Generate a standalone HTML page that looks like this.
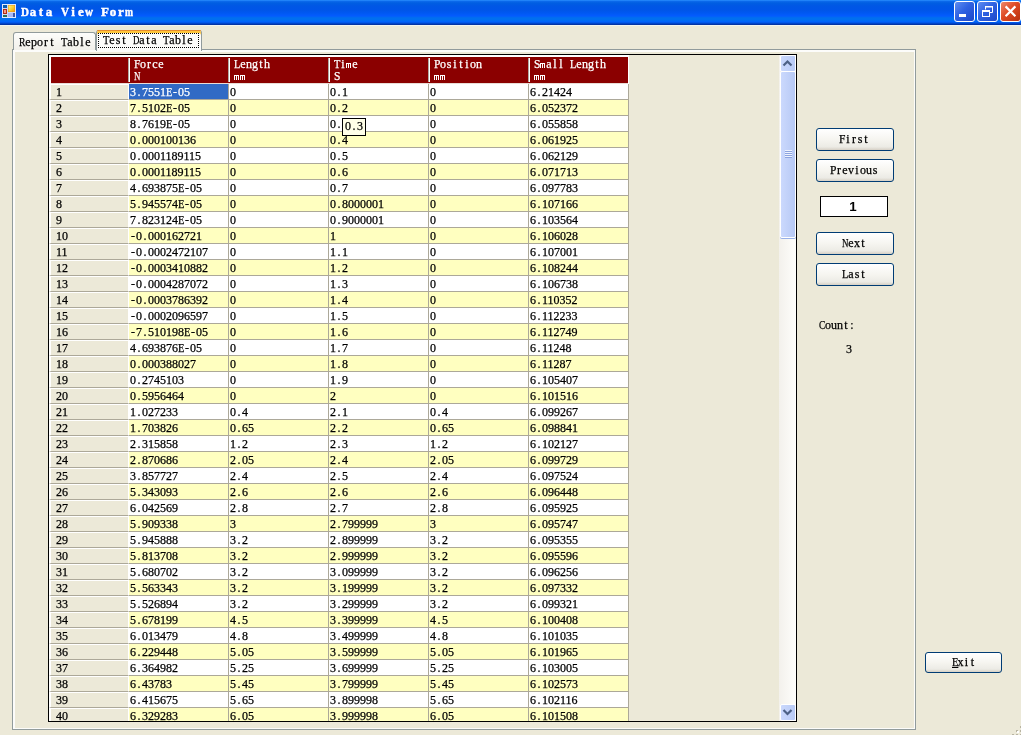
<!DOCTYPE html>
<html><head><meta charset="utf-8"><title>Data View Form</title>
<style>
html,body{margin:0;padding:0}
body{width:1021px;height:735px;overflow:hidden;background:#ECE9D8;position:relative;font-family:"Liberation Serif",serif;font-size:12px;color:#000}
div{box-sizing:border-box}
#w{position:absolute;left:0;top:0;width:1021px;height:735px;overflow:hidden;will-change:transform;-webkit-text-stroke:.25px}
/* monospace-cell emulation */
.m{white-space:nowrap}
.m b{display:inline-block;width:6px;text-align:center;font-weight:normal;white-space:nowrap}
.m b[class^=q]{text-align:left;transform-origin:0 50%}
.m s{display:inline-block;width:6px;text-decoration:none}
.m b.mo{width:6px;height:5px;font-size:0;line-height:0;vertical-align:baseline;overflow:hidden;background:linear-gradient(currentColor,currentColor) 0 0/5px 1px no-repeat,linear-gradient(currentColor,currentColor) 0 0/1px 5px no-repeat,linear-gradient(currentColor,currentColor) 2px 0/1px 5px no-repeat,linear-gradient(currentColor,currentColor) 4px 0/1px 5px no-repeat}
.q74{transform:scaleX(.74)}
.q80{transform:scaleX(.80)}
.q87{transform:scaleX(.87)}
.q96{transform:scaleX(.96)}
#tb{position:absolute;left:0;top:0;width:1021px;height:26px;border-bottom:1px solid #f1f5f1;background:linear-gradient(180deg,#2a8fff 0,#0a68ea 1.5px,#005ee2 3px,#0057e5 6px,#0055e8 10px,#0058f2 13px,#045cfe 16px,#0070ee 18px,#006ef2 20px,#0064fa 21.5px,#0052e4 23px,#0038b0 24px,#06309a 25px)}
#ico{position:absolute;left:2px;top:4px}
#ttl{position:absolute;left:21px;top:4px;height:16px;line-height:16px;font-family:"Liberation Serif",serif;font-weight:bold;font-size:13px;color:#fff;white-space:nowrap}
#ttl b{display:inline-block;width:8px;text-align:center;-webkit-text-stroke:.45px #fff}
.cb{position:absolute;top:1px;width:21px;height:21px;border:1px solid #fff;border-radius:3px;background:linear-gradient(135deg,#5e8df0 0,#2f62e2 45%,#1d47c8 100%);overflow:hidden}
.cb svg{position:absolute;left:-1px;top:-1px}
.cx{background:linear-gradient(135deg,#ee8a6c 0,#de4a24 45%,#b8300f 100%)}
#page{position:absolute;left:12px;top:49px;width:904px;height:681px;border:1px solid #919b9c;box-shadow:inset 2px 2px 0 #fcfcfa,inset -1px -1px 0 #fcfcfa}
#tab1{position:absolute;left:13px;top:32px;width:83px;height:18px;border:1px solid #919b9c;border-bottom:none;border-radius:3px 3px 0 0;background:linear-gradient(#fdfdfb,#f1f0ea);padding-left:5px;line-height:17px;padding-top:1px}
#tab2{position:absolute;left:96px;top:30px;width:106px;height:21px;border:1px solid #919b9c;border-bottom:none;border-top:none;border-radius:3px 3px 0 0;background:#fcfcfa;box-shadow:inset 0 3px 0 #ffc73c}
#tab2:before{content:"";position:absolute;left:0;right:0;top:0;height:1px;background:#e68b2c;border-radius:3px 3px 0 0}
#focus{position:absolute;left:1px;top:3px;width:101px;height:15px;border:1px dotted #000;line-height:13px;padding-left:4px}
#grid{position:absolute;left:48px;top:54px;width:749px;height:668px;border:1px solid #000;background:#ECE9D8;overflow:hidden}
#hdr{position:absolute;left:0;top:0;width:580px;height:29px;background:#fff}
#hdr:before{content:"";position:absolute;left:2px;top:2px;width:577px;height:26px;background:#8b0000}
#hdr:after{content:"";position:absolute;left:2px;top:28px;width:577px;height:1px;background:#e9dcd6}
.hc{position:absolute;top:2px;height:26px;background:#8b0000;color:#fff;line-height:12px;padding:1px 0 0 4px;overflow:hidden}
.hs{position:absolute;top:3px;width:2px;height:24px;background:#fff;border-left:1px solid #b0a8a0}
.r{position:absolute;left:0;width:580px;height:16px;line-height:15px}
.rh,.c{position:absolute;top:0;height:16px;border-bottom:1px solid #aca899;overflow:hidden}
.rh{left:0;width:80px;background:#ECE9D8;border-left:2px solid #fff;border-top:1px solid #fff;border-right:1px solid #fff;padding-left:5px;line-height:14px}
.c{width:100px;background:#fff;border-right:1px solid #aca899;padding:1px 0 0 1px}
.c:nth-child(2){left:80px}.c:nth-child(3){left:180px}.c:nth-child(4){left:280px}.c:nth-child(5){left:380px}.c:nth-child(6){left:480px}
.y .c{background:#ffffc0}
.c.sel{background:#316ac5;color:#fff}
#sb{position:absolute;left:730px;top:0;width:17px;height:666px;background:linear-gradient(90deg,#f3f1ec,#fefefb)}
#sbu,#sbd{position:absolute;left:1px;width:16px;height:17px;border:1px solid #fff;border-radius:2px;background:linear-gradient(90deg,#cad8fc,#b9cbf6);overflow:hidden}
#sbu{top:0}#sbd{bottom:0}
#sbu svg,#sbd svg{position:absolute;left:-1px;top:-1px}
#thumb{position:absolute;left:1px;top:16px;width:16px;height:167px;border:1px solid #fff;border-radius:2px;background:linear-gradient(90deg,#cbd9fd,#b7c9f5);box-shadow:0 1px 0 #98b0e8}
#thumb i{position:absolute;left:4px;top:78px;width:7px;height:8px;background:repeating-linear-gradient(180deg,#eef3fe 0,#eef3fe 1px,#8ca3df 1px,#8ca3df 2px)}
#tip{position:absolute;left:342px;top:118px;width:24px;height:18px;border:1px solid #000;background:#ffffe8;line-height:15px;padding-left:2px}
.btn{position:absolute;padding-right:2px;border:1px solid #003c74;border-radius:3px;background:linear-gradient(#ffffff 0,#f6f5f0 50%,#ecebe5 85%,#d6d0c5 100%);text-align:center}
#tx{position:absolute;left:820px;top:196px;width:68px;height:21px;border:1px solid #000;background:#fff;text-align:center;padding-right:2px;font:bold 13.33px "Liberation Sans",sans-serif;line-height:19px;-webkit-text-stroke:0}
.lbl{position:absolute;height:14px;line-height:14px}
#grip{position:absolute;left:1010px;top:724px}
</style></head>
<body>
<div id="w">
<div id="tb">
<svg id="ico" width="14" height="14" viewBox="0 0 14 14"><defs><linearGradient id="yg" x1="0" y1="0" x2="1" y2="1"><stop offset="0" stop-color="#fff584"/><stop offset=".55" stop-color="#fccf2e"/><stop offset="1" stop-color="#ef9a0a"/></linearGradient></defs><rect width="14" height="14" fill="#cdd9f8"/><rect x=".5" y=".5" width="13" height="13" fill="none" stroke="#e4ecfc"/><rect x="1" y="1" width="4" height="3" fill="#0a5cb0"/><rect x="1" y="5" width="4" height="5" fill="#b42c14"/><rect x="2" y="6" width="2" height="3" fill="#f29a84"/><rect x="1" y="11" width="4" height="2" fill="#2a6e58"/><rect x="6" y="1" width="7" height="7" fill="#e59418"/><rect x="6.5" y="1.5" width="6" height="6" fill="url(#yg)"/><rect x="6" y="9" width="5" height="4" fill="#a9b9f6"/><rect x="11" y="9" width="2" height="4" fill="#3a58a8"/></svg>
<div id="ttl"><b style="text-align:left;transform-origin:0 50%;transform:scaleX(0.85)">D</b><b>a</b><b>t</b><b>a</b><b>&nbsp;</b><b style="text-align:left;transform-origin:0 50%;transform:scaleX(0.85)">V</b><b>i</b><b>e</b><b style="text-align:left;transform-origin:0 50%;transform:scaleX(0.85)">w</b><b>&nbsp;</b><b>F</b><b>o</b><b>r</b><b style="text-align:left;transform-origin:0 50%;transform:scaleX(0.74)">m</b></div>
<div class="cb" style="left:954px"><svg width="21" height="21" viewBox="0 0 21 21"><rect x="5" y="13" width="7" height="3" fill="#fff"/></svg></div>
<div class="cb" style="left:977px"><svg width="21" height="21" viewBox="0 0 21 21"><path d="M8.5 8.5V5.5H15.5V11.5H12.5" fill="none" stroke="#fff" stroke-width="1"/><path d="M8 5H16V6.5H8z" fill="#fff"/><rect x="5.5" y="9.5" width="7" height="6" fill="none" stroke="#fff" stroke-width="1"/><path d="M5 9H13V11H5z" fill="#fff"/></svg></div>
<div class="cb cx" style="left:1000px"><svg width="21" height="21" viewBox="0 0 21 21"><path d="M5.6 5.4L15.4 15.2M15.4 5.4L5.6 15.2" stroke="#fff" stroke-width="2.2"/></svg></div>
</div>
<div id="page"></div>
<div id="tab1" class="m"><b class="q80">R</b><b>e</b>po<b>r</b><b>t</b><s> </s><b class="q87">T</b><b>a</b>b<b>l</b><b>e</b></div>
<div id="tab2"><div id="focus" class="m"><b class="q87">T</b><b>e</b><b>s</b><b>t</b><s> </s><b class="q74">D</b><b>a</b><b>t</b><b>a</b><s> </s><b class="q87">T</b><b>a</b>b<b>l</b><b>e</b></div></div>
<div id="grid">
<div id="hdr">
<div class="hc" style="left:2px;width:77px"></div>
<div class="hc m" style="left:81px;width:98px"><b class="q96">F</b>o<b>r</b><b>c</b><b>e</b><br><b class="q74">N</b></div>
<div class="hs" style="left:79px"></div>
<div class="hc m" style="left:181px;width:98px"><b class="q87">L</b><b>e</b>ng<b>t</b>h<br><b class="mo">m</b><b class="mo">m</b></div>
<div class="hs" style="left:179px"></div>
<div class="hc m" style="left:281px;width:98px"><b class="q87">T</b><b>i</b><b class="mo">m</b><b>e</b><br><b class="q96">S</b></div>
<div class="hs" style="left:279px"></div>
<div class="hc m" style="left:381px;width:98px"><b class="q96">P</b>o<b>s</b><b>i</b><b>t</b><b>i</b>on<br><b class="mo">m</b><b class="mo">m</b></div>
<div class="hs" style="left:379px"></div>
<div class="hc m" style="left:481px;width:98px"><b class="q96">S</b><b class="mo">m</b><b>a</b><b>l</b><b>l</b><s> </s><b class="q87">L</b><b>e</b>ng<b>t</b>h<br><b class="mo">m</b><b class="mo">m</b></div>
<div class="hs" style="left:479px"></div>
</div>
<div class="r m" style="top:29px"><div class="rh">1</div><div class="c sel">3<b>.</b>7551<b class="q87">E</b><b>-</b>05</div><div class="c">0</div><div class="c">0<b>.</b>1</div><div class="c">0</div><div class="c">6<b>.</b>21424</div></div>
<div class="r y m" style="top:45px"><div class="rh">2</div><div class="c">7<b>.</b>5102<b class="q87">E</b><b>-</b>05</div><div class="c">0</div><div class="c">0<b>.</b>2</div><div class="c">0</div><div class="c">6<b>.</b>052372</div></div>
<div class="r m" style="top:61px"><div class="rh">3</div><div class="c">8<b>.</b>7619<b class="q87">E</b><b>-</b>05</div><div class="c">0</div><div class="c">0<b>.</b></div><div class="c">0</div><div class="c">6<b>.</b>055858</div></div>
<div class="r y m" style="top:77px"><div class="rh">4</div><div class="c">0<b>.</b>000100136</div><div class="c">0</div><div class="c">0<b>.</b>4</div><div class="c">0</div><div class="c">6<b>.</b>061925</div></div>
<div class="r m" style="top:93px"><div class="rh">5</div><div class="c">0<b>.</b>0001189115</div><div class="c">0</div><div class="c">0<b>.</b>5</div><div class="c">0</div><div class="c">6<b>.</b>062129</div></div>
<div class="r y m" style="top:109px"><div class="rh">6</div><div class="c">0<b>.</b>0001189115</div><div class="c">0</div><div class="c">0<b>.</b>6</div><div class="c">0</div><div class="c">6<b>.</b>071713</div></div>
<div class="r m" style="top:125px"><div class="rh">7</div><div class="c">4<b>.</b>693875<b class="q87">E</b><b>-</b>05</div><div class="c">0</div><div class="c">0<b>.</b>7</div><div class="c">0</div><div class="c">6<b>.</b>097783</div></div>
<div class="r y m" style="top:141px"><div class="rh">8</div><div class="c">5<b>.</b>945574<b class="q87">E</b><b>-</b>05</div><div class="c">0</div><div class="c">0<b>.</b>8000001</div><div class="c">0</div><div class="c">6<b>.</b>107166</div></div>
<div class="r m" style="top:157px"><div class="rh">9</div><div class="c">7<b>.</b>823124<b class="q87">E</b><b>-</b>05</div><div class="c">0</div><div class="c">0<b>.</b>9000001</div><div class="c">0</div><div class="c">6<b>.</b>103564</div></div>
<div class="r y m" style="top:173px"><div class="rh">10</div><div class="c"><b>-</b>0<b>.</b>000162721</div><div class="c">0</div><div class="c">1</div><div class="c">0</div><div class="c">6<b>.</b>106028</div></div>
<div class="r m" style="top:189px"><div class="rh">11</div><div class="c"><b>-</b>0<b>.</b>0002472107</div><div class="c">0</div><div class="c">1<b>.</b>1</div><div class="c">0</div><div class="c">6<b>.</b>107001</div></div>
<div class="r y m" style="top:205px"><div class="rh">12</div><div class="c"><b>-</b>0<b>.</b>0003410882</div><div class="c">0</div><div class="c">1<b>.</b>2</div><div class="c">0</div><div class="c">6<b>.</b>108244</div></div>
<div class="r m" style="top:221px"><div class="rh">13</div><div class="c"><b>-</b>0<b>.</b>0004287072</div><div class="c">0</div><div class="c">1<b>.</b>3</div><div class="c">0</div><div class="c">6<b>.</b>106738</div></div>
<div class="r y m" style="top:237px"><div class="rh">14</div><div class="c"><b>-</b>0<b>.</b>0003786392</div><div class="c">0</div><div class="c">1<b>.</b>4</div><div class="c">0</div><div class="c">6<b>.</b>110352</div></div>
<div class="r m" style="top:253px"><div class="rh">15</div><div class="c"><b>-</b>0<b>.</b>0002096597</div><div class="c">0</div><div class="c">1<b>.</b>5</div><div class="c">0</div><div class="c">6<b>.</b>112233</div></div>
<div class="r y m" style="top:269px"><div class="rh">16</div><div class="c"><b>-</b>7<b>.</b>510198<b class="q87">E</b><b>-</b>05</div><div class="c">0</div><div class="c">1<b>.</b>6</div><div class="c">0</div><div class="c">6<b>.</b>112749</div></div>
<div class="r m" style="top:285px"><div class="rh">17</div><div class="c">4<b>.</b>693876<b class="q87">E</b><b>-</b>05</div><div class="c">0</div><div class="c">1<b>.</b>7</div><div class="c">0</div><div class="c">6<b>.</b>11248</div></div>
<div class="r y m" style="top:301px"><div class="rh">18</div><div class="c">0<b>.</b>000388027</div><div class="c">0</div><div class="c">1<b>.</b>8</div><div class="c">0</div><div class="c">6<b>.</b>11287</div></div>
<div class="r m" style="top:317px"><div class="rh">19</div><div class="c">0<b>.</b>2745103</div><div class="c">0</div><div class="c">1<b>.</b>9</div><div class="c">0</div><div class="c">6<b>.</b>105407</div></div>
<div class="r y m" style="top:333px"><div class="rh">20</div><div class="c">0<b>.</b>5956464</div><div class="c">0</div><div class="c">2</div><div class="c">0</div><div class="c">6<b>.</b>101516</div></div>
<div class="r m" style="top:349px"><div class="rh">21</div><div class="c">1<b>.</b>027233</div><div class="c">0<b>.</b>4</div><div class="c">2<b>.</b>1</div><div class="c">0<b>.</b>4</div><div class="c">6<b>.</b>099267</div></div>
<div class="r y m" style="top:365px"><div class="rh">22</div><div class="c">1<b>.</b>703826</div><div class="c">0<b>.</b>65</div><div class="c">2<b>.</b>2</div><div class="c">0<b>.</b>65</div><div class="c">6<b>.</b>098841</div></div>
<div class="r m" style="top:381px"><div class="rh">23</div><div class="c">2<b>.</b>315858</div><div class="c">1<b>.</b>2</div><div class="c">2<b>.</b>3</div><div class="c">1<b>.</b>2</div><div class="c">6<b>.</b>102127</div></div>
<div class="r y m" style="top:397px"><div class="rh">24</div><div class="c">2<b>.</b>870686</div><div class="c">2<b>.</b>05</div><div class="c">2<b>.</b>4</div><div class="c">2<b>.</b>05</div><div class="c">6<b>.</b>099729</div></div>
<div class="r m" style="top:413px"><div class="rh">25</div><div class="c">3<b>.</b>857727</div><div class="c">2<b>.</b>4</div><div class="c">2<b>.</b>5</div><div class="c">2<b>.</b>4</div><div class="c">6<b>.</b>097524</div></div>
<div class="r y m" style="top:429px"><div class="rh">26</div><div class="c">5<b>.</b>343093</div><div class="c">2<b>.</b>6</div><div class="c">2<b>.</b>6</div><div class="c">2<b>.</b>6</div><div class="c">6<b>.</b>096448</div></div>
<div class="r m" style="top:445px"><div class="rh">27</div><div class="c">6<b>.</b>042569</div><div class="c">2<b>.</b>8</div><div class="c">2<b>.</b>7</div><div class="c">2<b>.</b>8</div><div class="c">6<b>.</b>095925</div></div>
<div class="r y m" style="top:461px"><div class="rh">28</div><div class="c">5<b>.</b>909338</div><div class="c">3</div><div class="c">2<b>.</b>799999</div><div class="c">3</div><div class="c">6<b>.</b>095747</div></div>
<div class="r m" style="top:477px"><div class="rh">29</div><div class="c">5<b>.</b>945888</div><div class="c">3<b>.</b>2</div><div class="c">2<b>.</b>899999</div><div class="c">3<b>.</b>2</div><div class="c">6<b>.</b>095355</div></div>
<div class="r y m" style="top:493px"><div class="rh">30</div><div class="c">5<b>.</b>813708</div><div class="c">3<b>.</b>2</div><div class="c">2<b>.</b>999999</div><div class="c">3<b>.</b>2</div><div class="c">6<b>.</b>095596</div></div>
<div class="r m" style="top:509px"><div class="rh">31</div><div class="c">5<b>.</b>680702</div><div class="c">3<b>.</b>2</div><div class="c">3<b>.</b>099999</div><div class="c">3<b>.</b>2</div><div class="c">6<b>.</b>096256</div></div>
<div class="r y m" style="top:525px"><div class="rh">32</div><div class="c">5<b>.</b>563343</div><div class="c">3<b>.</b>2</div><div class="c">3<b>.</b>199999</div><div class="c">3<b>.</b>2</div><div class="c">6<b>.</b>097332</div></div>
<div class="r m" style="top:541px"><div class="rh">33</div><div class="c">5<b>.</b>526894</div><div class="c">3<b>.</b>2</div><div class="c">3<b>.</b>299999</div><div class="c">3<b>.</b>2</div><div class="c">6<b>.</b>099321</div></div>
<div class="r y m" style="top:557px"><div class="rh">34</div><div class="c">5<b>.</b>678199</div><div class="c">4<b>.</b>5</div><div class="c">3<b>.</b>399999</div><div class="c">4<b>.</b>5</div><div class="c">6<b>.</b>100408</div></div>
<div class="r m" style="top:573px"><div class="rh">35</div><div class="c">6<b>.</b>013479</div><div class="c">4<b>.</b>8</div><div class="c">3<b>.</b>499999</div><div class="c">4<b>.</b>8</div><div class="c">6<b>.</b>101035</div></div>
<div class="r y m" style="top:589px"><div class="rh">36</div><div class="c">6<b>.</b>229448</div><div class="c">5<b>.</b>05</div><div class="c">3<b>.</b>599999</div><div class="c">5<b>.</b>05</div><div class="c">6<b>.</b>101965</div></div>
<div class="r m" style="top:605px"><div class="rh">37</div><div class="c">6<b>.</b>364982</div><div class="c">5<b>.</b>25</div><div class="c">3<b>.</b>699999</div><div class="c">5<b>.</b>25</div><div class="c">6<b>.</b>103005</div></div>
<div class="r y m" style="top:621px"><div class="rh">38</div><div class="c">6<b>.</b>43783</div><div class="c">5<b>.</b>45</div><div class="c">3<b>.</b>799999</div><div class="c">5<b>.</b>45</div><div class="c">6<b>.</b>102573</div></div>
<div class="r m" style="top:637px"><div class="rh">39</div><div class="c">6<b>.</b>415675</div><div class="c">5<b>.</b>65</div><div class="c">3<b>.</b>899998</div><div class="c">5<b>.</b>65</div><div class="c">6<b>.</b>102116</div></div>
<div class="r y m" style="top:653px"><div class="rh">40</div><div class="c">6<b>.</b>329283</div><div class="c">6<b>.</b>05</div><div class="c">3<b>.</b>999998</div><div class="c">6<b>.</b>05</div><div class="c">6<b>.</b>101508</div></div>
<div id="sb"><div id="sbu"><svg width="15" height="16" viewBox="0 0 15 16"><path d="M3.5 10.5L7.5 6.5L11.5 10.5" fill="none" stroke="#4d6185" stroke-width="2.2"/></svg></div><div id="thumb"><i></i></div><div id="sbd"><svg width="15" height="16" viewBox="0 0 15 16"><path d="M3.5 6L7.5 10L11.5 6" fill="none" stroke="#4d6185" stroke-width="2.2"/></svg></div></div>
</div>
<div id="tip" class="m">0<b>.</b>3</div>
<div class="btn m" style="left:816px;top:128px;width:78px;height:23px;line-height:21px"><b class="q96">F</b><b>i</b><b>r</b><b>s</b><b>t</b></div>
<div class="btn m" style="left:816px;top:159px;width:78px;height:23px;line-height:21px"><b class="q96">P</b><b>r</b><b>e</b>v<b>i</b>ou<b>s</b></div>
<div class="btn m" style="left:816px;top:232px;width:78px;height:23px;line-height:21px"><b class="q74">N</b><b>e</b>x<b>t</b></div>
<div class="btn m" style="left:816px;top:263px;width:78px;height:23px;line-height:21px"><b class="q87">L</b><b>a</b><b>s</b><b>t</b></div>
<div id="tx">1</div>
<div class="lbl m" style="left:819px;top:318px"><b class="q80">C</b>oun<b>t</b><b>:</b></div>
<div class="lbl m" style="left:846px;top:342px">3</div>
<div class="btn m" style="left:925px;top:652px;width:77px;height:21px;line-height:19px;padding-right:0"><b style="text-decoration:underline" class="q87">E</b>x<b>i</b><b>t</b></div>
<svg id="grip" width="14" height="14" viewBox="0 0 14 14"><g fill="#b8b4a2"><rect x="10" y="2" width="2" height="2"/><rect x="6" y="6" width="2" height="2"/><rect x="10" y="6" width="2" height="2"/><rect x="2" y="10" width="2" height="2"/><rect x="6" y="10" width="2" height="2"/><rect x="10" y="10" width="2" height="2"/></g><g fill="#fff"><rect x="11" y="3" width="2" height="2"/><rect x="7" y="7" width="2" height="2"/><rect x="11" y="7" width="2" height="2"/><rect x="3" y="11" width="2" height="2"/><rect x="7" y="11" width="2" height="2"/><rect x="11" y="11" width="2" height="2"/></g></svg>
</div>
</body></html>
